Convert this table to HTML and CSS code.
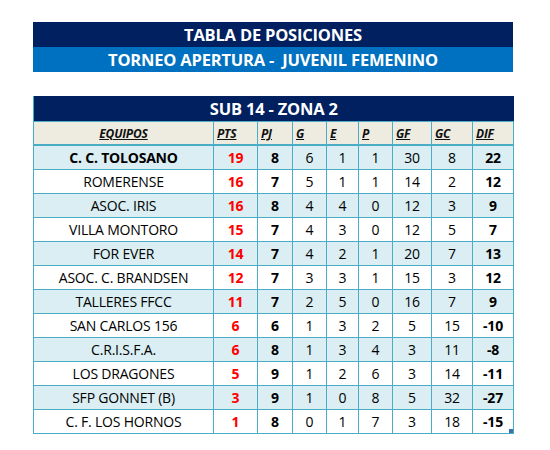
FILE: index.html
```html
<!DOCTYPE html>
<html>
<head>
<meta charset="utf-8">
<link rel="stylesheet" href="styles.css">
</head>
<body>
<div class="page">
  <div class="title">
    <div class="t1">TABLA DE POSICIONES</div>
    <div class="t2">TORNEO APERTURA -&nbsp; JUVENIL FEMENINO</div>
  </div>
  <table class="tbl">
    <colgroup>
      <col class="c-eq"><col class="c-pts"><col class="c-pj"><col class="c-g"><col class="c-e"><col class="c-p"><col class="c-gf"><col class="c-gc"><col class="c-dif">
    </colgroup>
    <thead>
      <tr class="zona"><th colspan="9">SUB 14 - ZONA 2</th></tr>
      <tr class="hdr">
        <th class="eq">EQUIPOS</th><th>PTS</th><th>PJ</th><th>G</th><th>E</th><th>P</th><th>GF</th><th>GC</th><th>DIF</th>
      </tr>
    </thead>
    <tbody>
      <tr class="alt"><td class="team b">C. C. TOLOSANO</td><td class="pts">19</td><td class="b">8</td><td>6</td><td>1</td><td>1</td><td>30</td><td>8</td><td class="b">22</td></tr>
      <tr><td class="team">ROMERENSE</td><td class="pts">16</td><td class="b">7</td><td>5</td><td>1</td><td>1</td><td>14</td><td>2</td><td class="b">12</td></tr>
      <tr class="alt"><td class="team">ASOC. IRIS</td><td class="pts">16</td><td class="b">8</td><td>4</td><td>4</td><td>0</td><td>12</td><td>3</td><td class="b">9</td></tr>
      <tr><td class="team">VILLA MONTORO</td><td class="pts">15</td><td class="b">7</td><td>4</td><td>3</td><td>0</td><td>12</td><td>5</td><td class="b">7</td></tr>
      <tr class="alt"><td class="team">FOR EVER</td><td class="pts">14</td><td class="b">7</td><td>4</td><td>2</td><td>1</td><td>20</td><td>7</td><td class="b">13</td></tr>
      <tr><td class="team">ASOC. C. BRANDSEN</td><td class="pts">12</td><td class="b">7</td><td>3</td><td>3</td><td>1</td><td>15</td><td>3</td><td class="b">12</td></tr>
      <tr class="alt"><td class="team">TALLERES FFCC</td><td class="pts">11</td><td class="b">7</td><td>2</td><td>5</td><td>0</td><td>16</td><td>7</td><td class="b">9</td></tr>
      <tr><td class="team">SAN CARLOS 156</td><td class="pts">6</td><td class="b">6</td><td>1</td><td>3</td><td>2</td><td>5</td><td>15</td><td class="b">-10</td></tr>
      <tr class="alt"><td class="team">C.R.I.S.F.A.</td><td class="pts">6</td><td class="b">8</td><td>1</td><td>3</td><td>4</td><td>3</td><td>11</td><td class="b">-8</td></tr>
      <tr><td class="team">LOS DRAGONES</td><td class="pts">5</td><td class="b">9</td><td>1</td><td>2</td><td>6</td><td>3</td><td>14</td><td class="b">-11</td></tr>
      <tr class="alt"><td class="team">SFP GONNET (B)</td><td class="pts">3</td><td class="b">9</td><td>1</td><td>0</td><td>8</td><td>5</td><td>32</td><td class="b">-27</td></tr>
      <tr><td class="team">C. F. LOS HORNOS</td><td class="pts">1</td><td class="b">8</td><td>0</td><td>1</td><td>7</td><td>3</td><td>18</td><td class="b last">-15<span class="handle"></span></td></tr>
    </tbody>
  </table>
</div>
</body>
</html>
```
FILE: styles.css
```css
html, body {
  margin: 0;
  padding: 0;
  background: #ffffff;
}
body {
  font-family: "Open Sans", "Liberation Sans", sans-serif;
  color: #000;
}
.page {
  padding: 22px 0 0 33px;
  width: 480px;
}
.title {
  display: flex;
  flex-direction: column;
  color: #fff;
  font-weight: bold;
  font-size: 16.5px;
  text-align: center;
  letter-spacing: -0.2px;
}
.t1 {
  background: #002060;
  height: 25px;
  line-height: 25px;
}
.t2 {
  background: #0070c0;
  height: 25px;
  line-height: 25px;
}
.tbl {
  margin-top: 24px;
  border-collapse: collapse;
  table-layout: fixed;
  width: 480px;
  font-size: 14px;
}
.c-eq { width: 180px; }
.c-pts { width: 44px; }
.c-pj { width: 35px; }
.c-g { width: 34px; }
.c-e { width: 32px; }
.c-p { width: 34px; }
.c-gf { width: 39px; }
.c-gc { width: 41px; }
.c-dif { width: 41px; }
.zona th {
  background: #002060;
  color: #fff;
  height: 25px;
  padding: 0;
  font-size: 16.5px;
  font-weight: bold;
  letter-spacing: -0.2px;
  border-left: 1px solid #4bacc6;
}
.hdr th {
  background: #eeece1;
  height: 22px;
  padding: 0 0 0 3px;
  text-align: left;
  font-size: 12px;
  font-style: italic;
  font-weight: bold;
  text-decoration: underline;
  color: #111;
  border: 1px solid #4bacc6;
  border-bottom: 2px solid #4bacc6;
  letter-spacing: -0.2px;
}
.hdr th.eq {
  text-align: center;
  padding: 0;
}
td {
  border: 1px solid #4bacc6;
  height: 23px;
  padding: 0;
  text-align: center;
  font-size: 14px;
  letter-spacing: -0.2px;
}
tr.alt td {
  background: #daeef3;
}
.b {
  font-weight: bold;
}
.team {
  font-size: 14px;
}
.team.b {
  font-size: 14px;
}
.pts {
  color: #ff0000;
  font-weight: bold;
  font-size: 14px;
}
.last {
  position: relative;
}
.handle {
  position: absolute;
  right: 0;
  bottom: 0;
  width: 4px;
  height: 4px;
  background: #3a6fb0;
}
```
